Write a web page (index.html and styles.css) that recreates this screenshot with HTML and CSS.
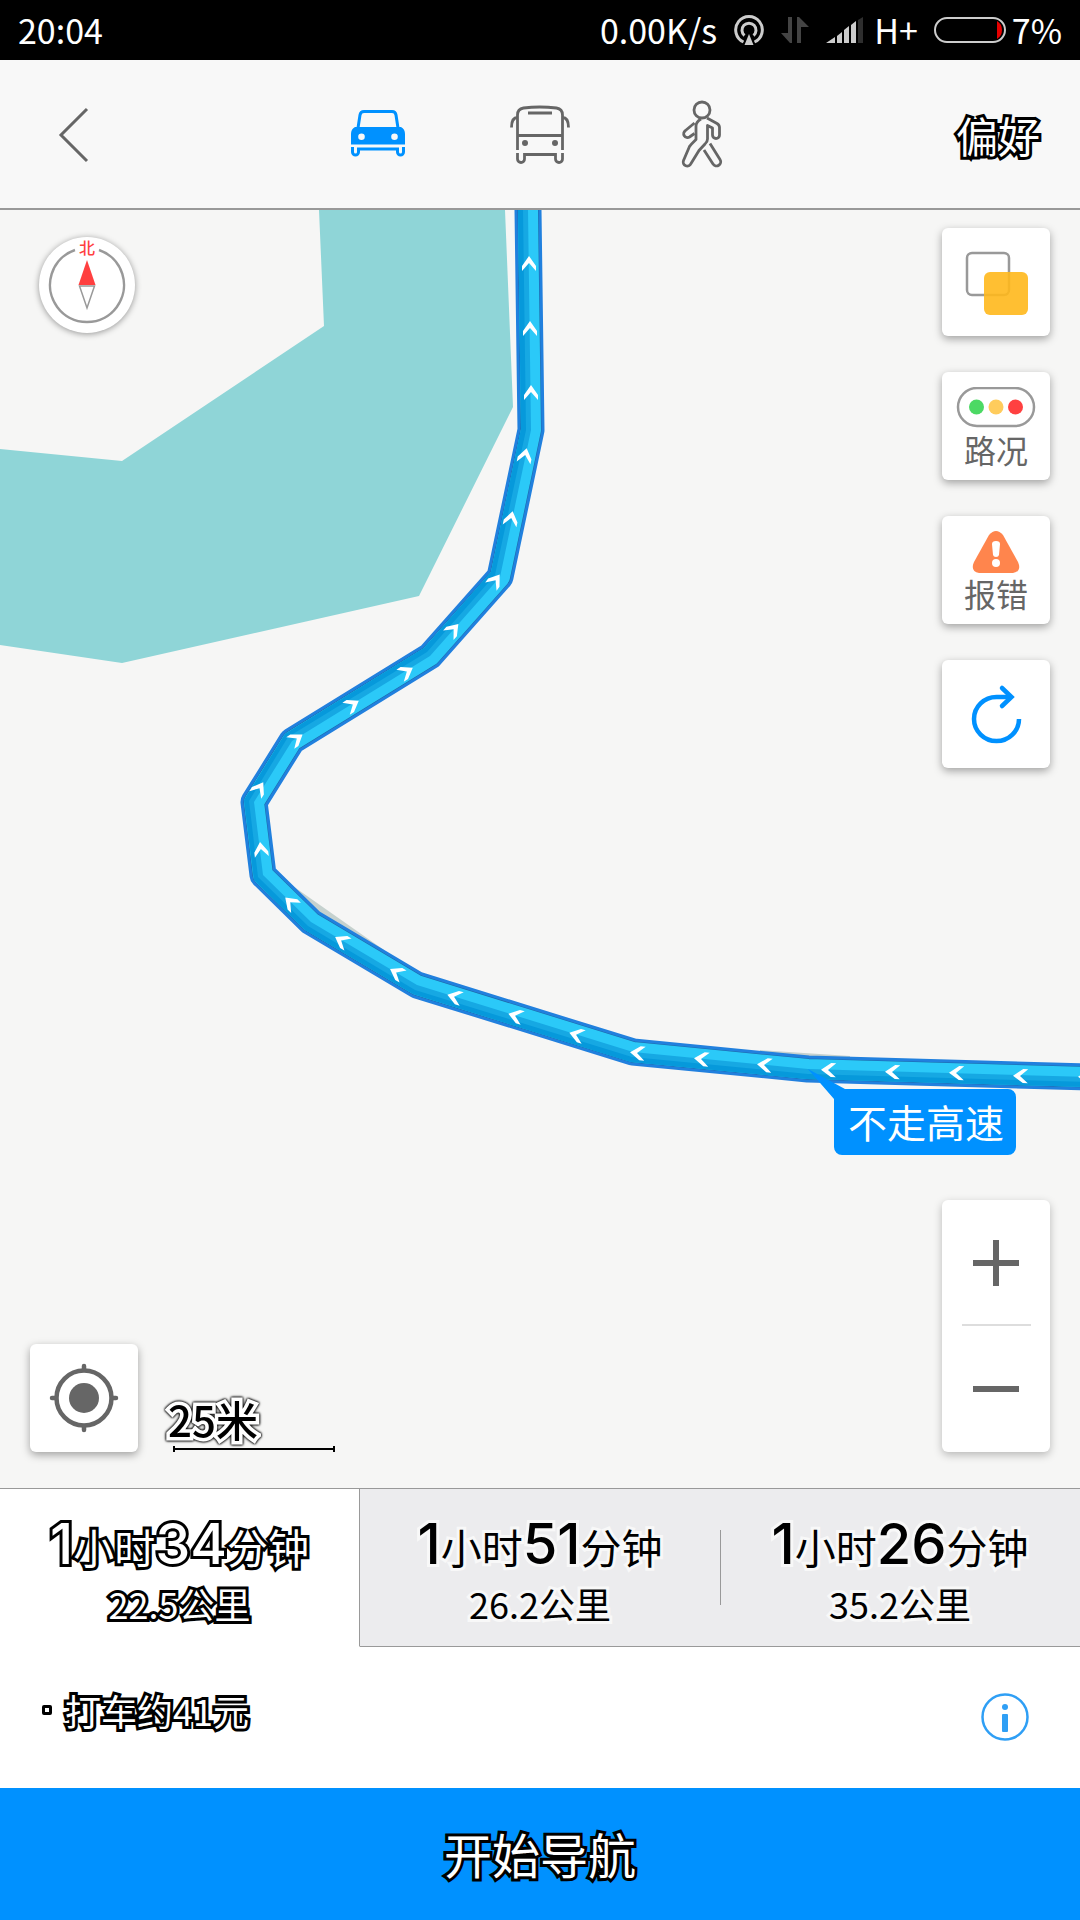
FILE: index.html
```html
<!DOCTYPE html>
<html lang="zh-CN">
<head>
  <meta charset="UTF-8" />
  <meta name="viewport" content="width=device-width, initial-scale=1" />
  <title>路线规划</title>
  <link rel="stylesheet" href="styles.css">
</head>
<body>
  <div class="status-bar">
    <span class="clock">20:04</span>
    <div class="status-right">
      <span>0.00K/s</span>
      <svg class="status-icon" width="30" height="30" viewBox="0 0 30 30" fill="none" stroke="#ccc" stroke-width="3">
        <path d="M9.500 27a13.300 13.300 0 1 1 11 0"/>
        <path d="M10.500 20.500a7 7 0 1 1 9 0"/>
        <path d="M15 19l4.500 11h-9z" fill="#ccc" stroke="none"/>
      </svg>
      <svg class="status-icon" width="28" height="28" viewBox="0 0 28 28" fill="#444">
        <path d="M7 1h4v26h-2L0 17h7z"/>
        <path d="M16 27V1h2l10 10h-8v16z"/>
      </svg>
      <svg class="status-icon" width="38" height="28" viewBox="0 0 38 28" fill="#ccc">
        <path d="M0 27l9-6v6zM11 20l5-4v11h-5zM18 14l5-4v17h-5zM25 9l5-4v22h-5z"/>
        <path d="M32 4l5-3v26h-5z" fill="#2e2e2e"/>
      </svg>
      <span class="network">H+</span>
      <svg class="battery" width="72" height="28" viewBox="0 0 72 28">
        <rect x="1" y="2" width="70" height="24" rx="12" fill="none" stroke="#ccc" stroke-width="2"/>
        <path d="M63 5q5 3 5 9t-5 9z" fill="#e60000"/>
      </svg>
      <span>7%</span>
    </div>
  </div>

  <header class="top-bar">
    <button class="back" aria-label="返回">
      <svg width="32" height="56" viewBox="0 0 32 56" fill="none" stroke="#666" stroke-width="3">
        <path d="M29 2L3 28l26 26"/>
      </svg>
    </button>
    <nav class="modes">
      <button class="mode" aria-label="驾车">
        <svg width="60" height="60" viewBox="0 0 60 60" fill="none" stroke="#0091ff" stroke-width="3">
          <path d="M10 23l2-13q.5-3.500 4-3.500h28q3.500 0 4 3.500l2 13"/>
          <path d="M7 22h46q4 2 4 7v10.500H3V29q0-5 4-7zM13.500 28.500a3.300 3.300 0 1 0 0 6.600a3.300 3.300 0 0 0 0-6.600zM46.500 28.500a3.300 3.300 0 1 0 0 6.600a3.300 3.300 0 0 0 0-6.600z" fill="#0091ff" fill-rule="evenodd" stroke="none"/>
          <path d="M4.500 42v5a3 3 0 0 0 6 0v-3h39v3a3 3 0 0 0 6 0v-5"/>
        </svg>
      </button>
      <button class="mode" aria-label="公交">
        <svg width="60" height="60" viewBox="0 0 60 60" fill="none" stroke="#666" stroke-width="2.800">
          <path d="M7.500 45V10q0-6 6-7 16-2 33 0 6 1 6 7v35M7.500 30.500h45M18 8h24"/>
          <path d="M7.500 12.500q-6 0-6 10M52.500 12.500q6 0 6 10"/>
          <path d="M7.500 48v6a3.500 3.500 0 0 0 7 0v-4.500h31V54a3.500 3.500 0 0 0 7 0v-6"/>
          <circle cx="15" cy="38" r="3" fill="#666" stroke="none"/>
          <circle cx="45" cy="38" r="3" fill="#666" stroke="none"/>
        </svg>
      </button>
      <button class="mode" aria-label="步行">
        <svg width="60" height="72" viewBox="0 0 60 72" fill="none" stroke="#666" stroke-width="2.800" stroke-linejoin="round">
          <circle cx="30" cy="11" r="8"/>
          <path d="M35 19l10 5.500q2.500 1.500 2.500 4V36a3.500 3.500 0 0 1-7 0v-7l-5-2.500V40q0 3-2.500 5l-6 6.500-8 13a4 4 0 0 1-7.500-3l6-14q.5-1 6.500-7V27q0-4 5-7"/>
          <path d="M22.500 24l-9 7.500a3.800 3.800 0 0 0 4 6.500l5-3.500"/>
          <path d="M38 44.500l10 16a4 4 0 0 1-7 4.500l-9-14"/>
        </svg>
      </button>
    </nav>
    <button class="prefer outline-dark">偏好</button>
  </header>

  <main class="map">
    <svg class="map-canvas" viewBox="0 210 1080 1278" preserveAspectRatio="xMidYMid slice">
      <defs>
        <path id="arrow" d="M0-8L7 2V7L0-1L-7 7V2z"/>
      </defs>
      <!-- water -->
      <path fill="#8fd5d7" d="M319 210L324 326L122 461L0 449V645L122 663L419 596L513 407L505 210z"/>
      <!-- side road under the route -->
      <path fill="#c5d1ce" d="M290 884L384 950L372 958L300 910zM760 1050L850 1056V1062H760z"/>
      <!-- route -->
      <g fill="none" stroke-linejoin="round">
        <path stroke="#2180de" stroke-width="27" d="M528 200V210L531 430L500 577L430 656L292 741L254 802L263 875L311 922L417 985L633 1052L808 1069L1090 1077"/>
        <path stroke="#1d69a6" stroke-width="21" d="M528 200V210L531 430L500 577L430 656L292 741L254 802L263 875L311 922L417 985L633 1052L808 1069L1090 1077"/>
        <path stroke="#2bc9f8" stroke-width="20" d="M528 200V210L531 430L500 577L430 656L292 741L254 802L263 875L311 922L417 985L633 1052L808 1069L1090 1077"/>
      </g>
      <path fill="#16a8e3" d="M528 210L531 430L500 577L430 656L292 741L254 802L263 875L311 922L417 985L633 1052L808 1069L1090 1077V1087L807 1079L631 1062L413 994L305 930L254 880L244 800L285 734L424 648L491 572L521 429L518 210z"/>
      <path fill="#0699db" d="M523 210L526 430L495 575L427 652L288 737L249 801L258 877L308 926L415 990L632 1057L808 1074L1090 1082V1087L807 1079L631 1062L413 994L305 930L254 880L244 800L285 734L424 648L491 572L521 429L518 210z"/>
      <g fill="#fff">
        <use href="#arrow" transform="translate(529 264)"/>
        <use href="#arrow" transform="translate(530 329)"/>
        <use href="#arrow" transform="translate(531 393)"/>
        <use href="#arrow" transform="translate(525 456) rotate(12)"/>
        <use href="#arrow" transform="translate(511 519) rotate(12)"/>
        <use href="#arrow" transform="translate(495 581) rotate(36)"/>
        <use href="#arrow" transform="translate(453 630) rotate(42)"/>
        <use href="#arrow" transform="translate(406 672) rotate(58)"/>
        <use href="#arrow" transform="translate(352 705) rotate(58)"/>
        <use href="#arrow" transform="translate(296 739) rotate(55)"/>
        <use href="#arrow" transform="translate(259 789) rotate(32)"/>
        <use href="#arrow" transform="translate(261 850) rotate(-7)"/>
        <use href="#arrow" transform="translate(291 903) rotate(-46)"/>
        <use href="#arrow" transform="translate(342 941) rotate(-59)"/>
        <use href="#arrow" transform="translate(397 973) rotate(-60)"/>
        <use href="#arrow" transform="translate(455 997) rotate(-73)"/>
        <use href="#arrow" transform="translate(516 1016) rotate(-73)"/>
        <use href="#arrow" transform="translate(577 1035) rotate(-73)"/>
        <use href="#arrow" transform="translate(638 1053) rotate(-84)"/>
        <use href="#arrow" transform="translate(702 1059) rotate(-84)"/>
        <use href="#arrow" transform="translate(765 1065) rotate(-84)"/>
        <use href="#arrow" transform="translate(829 1070) rotate(-88)"/>
        <use href="#arrow" transform="translate(893 1072) rotate(-88)"/>
        <use href="#arrow" transform="translate(957 1073) rotate(-88)"/>
        <use href="#arrow" transform="translate(1021 1076) rotate(-88)"/>
        <use href="#arrow" transform="translate(1086 1077) rotate(-88)"/>
      </g>
      <!-- route label -->
      <path fill="#0091ff" d="M808 1069L845 1089H1008a8 8 0 0 1 8 8V1147a8 8 0 0 1-8 8H842a8 8 0 0 1-8-8V1099z"/>
      <text class="route-label" x="926" y="1138">不走高速</text>
    </svg>

    <div class="map-left">
      <svg class="compass" width="114" height="114" viewBox="0 0 114 114">
        <circle class="compass-disc" cx="57" cy="57" r="48"/>
        <path d="M69 22a37 37 0 1 1-24 0" fill="none" stroke="#999" stroke-width="2.500"/>
        <path d="M57 32l8.500 25h-17z" fill="#ff4040"/>
        <path d="M49.500 58h15L57 80z" fill="none" stroke="#999" stroke-width="1.500"/>
        <text class="compass-text" x="57" y="26">北</text>
      </svg>
      <div class="map-foot">
        <button class="tool" aria-label="定位">
          <svg width="72" height="72" viewBox="0 0 72 72" fill="none" stroke="#666" stroke-width="4.500">
            <circle cx="36" cy="36" r="27.500"/>
            <circle cx="36" cy="36" r="15" fill="#666" stroke="none"/>
            <path d="M36 4v4M36 64v4M4 36h4M64 36h4" stroke-linecap="round"/>
          </svg>
        </button>
        <div class="scale">
          <span class="scale-text">25米</span>
          <div class="scale-line"></div>
        </div>
      </div>
    </div>

    <div class="map-right">
      <div class="tools">
        <button class="tool" aria-label="图层">
          <svg width="108" height="108" viewBox="0 0 108 108">
            <rect x="25" y="25" width="42" height="42" rx="5" fill="none" stroke="#999" stroke-width="2.500"/>
            <rect x="42" y="44" width="44" height="43" rx="6" fill="#ffb81c" fill-opacity=".9"/>
          </svg>
        </button>
        <button class="tool labelled">
          <svg width="80" height="42" viewBox="0 0 80 42">
            <rect x="2" y="1" width="76" height="38" rx="19" fill="none" stroke="#999" stroke-width="2.500"/>
            <circle cx="20.500" cy="20" r="7.500" fill="#4cd964"/>
            <circle cx="40" cy="20" r="7.500" fill="#ffcc5c"/>
            <circle cx="59.500" cy="20" r="7.500" fill="#ff4040"/>
          </svg>
          <span>路况</span>
        </button>
        <button class="tool labelled">
          <svg width="48" height="42" viewBox="0 0 48 42">
            <path fill="#ff854d" d="M17 4q7-8 14 0l15 27q4 9-5 11H7q-9-2-5-11z"/>
            <path fill="#fff" d="M20 13q0-3 4-3t4 3l-1 11q-.5 2-3 2t-3-2z"/>
            <circle cx="24" cy="32" r="4" fill="#fff"/>
          </svg>
          <span>报错</span>
        </button>
        <button class="tool" aria-label="刷新">
          <svg width="108" height="108" viewBox="0 0 108 108" fill="none" stroke="#0091ff" stroke-width="4.500">
            <path d="M77 59A22.500 22 0 1 1 54.500 37H69"/>
            <path d="M60 28l9.500 9-9.500 9" stroke-linecap="round"/>
          </svg>
        </button>
      </div>
      <div class="zoom">
        <button class="zoom-btn" aria-label="放大">
          <svg width="46" height="46" viewBox="0 0 46 46" stroke="#666" stroke-width="6"><path d="M23 0v46M0 23h46"/></svg>
        </button>
        <button class="zoom-btn" aria-label="缩小">
          <svg width="46" height="46" viewBox="0 0 46 46" stroke="#666" stroke-width="6"><path d="M0 23h46"/></svg>
        </button>
      </div>
    </div>
  </main>

  <section class="routes">
    <button class="route active">
      <span class="time outline-dark"><b>1</b>小时<b>34</b>分钟</span>
      <span class="distance outline-dark">22.5公里</span>
    </button>
    <button class="route">
      <span class="time"><b>1</b>小时<b>51</b>分钟</span>
      <span class="distance">26.2公里</span>
    </button>
    <button class="route">
      <span class="time"><b>1</b>小时<b>26</b>分钟</span>
      <span class="distance">35.2公里</span>
    </button>
  </section>

  <section class="detail">
    <ul class="taxi">
      <li><i class="dot"></i><span class="outline-dark">打车约41元</span></li>
    </ul>
    <button class="info" aria-label="详情">
      <svg width="48" height="48" viewBox="0 0 48 48">
        <circle cx="24" cy="24" r="22.500" fill="none" stroke="#2f9ff5" stroke-width="2.500"/>
        <circle cx="24" cy="14" r="3" fill="#2f9ff5"/>
        <rect x="21" y="21" width="6" height="18" rx="1" fill="#2f9ff5"/>
      </svg>
    </button>
  </section>

  <button class="start outline-dark">开始导航</button>
</body>
</html>
```
FILE: styles.css
```css
* {
  box-sizing: border-box;
  margin: 0;
  padding: 0;
}
body {
  display: flex;
  flex-direction: column;
  min-height: 100vh;
  background: #fff;
  color: #000;
  font-family: "Noto Sans CJK SC", sans-serif;
}
button {
  border: none;
  background: none;
  color: inherit;
  font-family: inherit;
  cursor: pointer;
}
svg {
  display: block;
}
.outline-dark {
  color: #fff;
  -webkit-text-stroke: 6px #000;
  paint-order: stroke fill;
  stroke-linejoin: round;
}

/* status bar */
.status-bar {
  display: flex;
  justify-content: space-between;
  align-items: center;
  height: 60px;
  padding: 0 18px;
  background: #000;
  color: #fff;
  font-size: 34px;
  line-height: 60px;
}
.status-right {
  display: flex;
  align-items: center;
}
.status-icon {
  margin-left: 17px;
}
.network {
  margin: 0 16px 0 10px;
}
.battery {
  margin-right: 6px;
}

/* top bar */
.top-bar {
  display: grid;
  grid-template-columns: 1fr auto 1fr;
  align-items: center;
  height: 150px;
  padding: 2px 40px 0;
  background: #f8f8f8;
  border-bottom: 2px solid #999;
}
.back {
  justify-self: start;
  padding: 0 18px;
}
.modes {
  display: flex;
}
.mode {
  display: flex;
  justify-content: center;
  align-items: center;
  width: 162px;
  height: 120px;
}
.prefer {
  justify-self: end;
  font-size: 42px;
  line-height: 60px;
}

/* map */
.map {
  position: relative;
  display: flex;
  flex: 1;
  justify-content: space-between;
  min-height: 900px;
  padding: 18px 30px 36px;
  background: #f6f6f5;
  overflow: hidden;
}
.map-canvas {
  position: absolute;
  inset: 0;
  width: 100%;
  height: 100%;
}
.route-label {
  fill: #fff;
  font-size: 39px;
  text-anchor: middle;
}
.map-left,
.map-right {
  position: relative;
  display: flex;
  flex-direction: column;
  justify-content: space-between;
}
.compass-disc {
  fill: #fff;
  filter: drop-shadow(0 1px 3px rgba(0, 0, 0, 0.4));
}
.compass-text {
  fill: #ff4040;
  font-size: 16px;
  font-weight: 500;
  text-anchor: middle;
}
.tools {
  display: flex;
  flex-direction: column;
  gap: 36px;
}
.tool {
  display: flex;
  flex-direction: column;
  justify-content: center;
  align-items: center;
  width: 108px;
  height: 108px;
  border-radius: 6px;
  background: #fff;
  box-shadow: 0 3px 8px rgba(0, 0, 0, 0.35);
  color: #666;
  font-size: 32px;
  line-height: 40px;
}
.labelled {
  padding-top: 3px;
}
.zoom {
  border-radius: 6px;
  background: #fff;
  box-shadow: 0 3px 8px rgba(0, 0, 0, 0.25);
}
.zoom-btn {
  display: flex;
  justify-content: center;
  align-items: center;
  width: 108px;
  height: 126px;
}
.zoom-btn:first-child {
  background: linear-gradient(#ddd, #ddd) center bottom / 69px 2px no-repeat;
}
.map-foot {
  display: flex;
  align-items: flex-end;
  gap: 30px;
}
.scale-text {
  display: block;
  font-size: 42px;
  font-weight: 500;
  line-height: 54px;
  -webkit-text-stroke: 7px #fff;
  paint-order: stroke fill;
  filter: drop-shadow(0 0 1px #000) drop-shadow(0 0 1px #000);
}
.scale-line {
  width: 162px;
  height: 6px;
  margin-left: 5px;
  border: solid #000;
  border-width: 0 2px;
  background: linear-gradient(#000, #000) center / 100% 2px no-repeat;
}

/* route tabs */
.routes {
  display: grid;
  grid-template-columns: repeat(3, 1fr);
  border-top: 1px solid #999;
}
.route {
  position: relative;
  display: flex;
  flex-direction: column;
  justify-content: center;
  align-items: center;
  height: 158px;
  padding-bottom: 6px;
  background: #ececee;
  border-bottom: 1px solid #999;
}
.route.active {
  background: #fff;
  border-right: 1px solid #999;
  border-bottom-color: #fff;
}
.route:last-child::before {
  content: "";
  position: absolute;
  top: 41px;
  left: 0;
  width: 1px;
  height: 75px;
  background: #999;
}
.time {
  font-size: 41px;
  line-height: 74px;
}
.time b {
  font-family: Inter, sans-serif;
  font-size: 56px;
  font-weight: 500;
}
.distance {
  font-size: 36px;
  line-height: 40px;
}
.route:not(.active) span {
  -webkit-text-stroke: 6px #f8f8f8;
  paint-order: stroke fill;
}

/* detail row */
.detail {
  display: flex;
  justify-content: space-between;
  align-items: center;
  height: 141px;
  padding: 0 51px 2px 42px;
}
.taxi {
  padding-bottom: 14px;
  font-size: 36px;
  list-style: none;
}
.taxi li {
  display: flex;
  align-items: center;
  gap: 13px;
}
.dot {
  width: 10px;
  height: 10px;
  border: 3px solid #000;
  border-radius: 2px;
}
.start {
  height: 132px;
  padding-bottom: 3px;
  background: #0091ff;
  font-size: 48px;
}
```
